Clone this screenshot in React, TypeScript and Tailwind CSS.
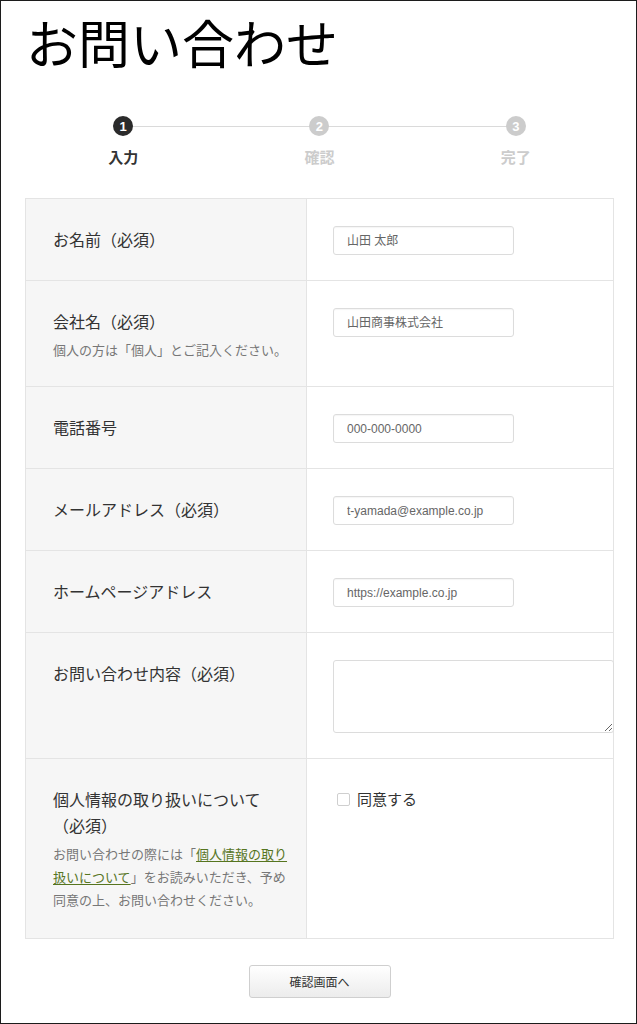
import React from 'react';

const JP = { fontFamily: '"Noto Sans CJK JP", "Liberation Sans", sans-serif' };

const STEPS = [
  { no: 1, label: '入力', active: true },
  { no: 2, label: '確認', active: false },
  { no: 3, label: '完了', active: false },
];

type Row = {
  label: string;
  note?: React.ReactNode;
  field: React.ReactNode;
};

function TextInput({ placeholder }: { placeholder: string }) {
  return (
    <input
      type="text"
      placeholder={placeholder}
      className="block w-[181px] h-[29px] px-[13px] border border-[#dcdcdc] rounded-[3px] bg-white text-[12px] text-[#555] placeholder:text-[#666] shadow-[inset_0_1px_1px_rgba(0,0,0,0.04)] outline-none"
      style={{ fontFamily: '"Liberation Sans", "Noto Sans CJK JP", sans-serif' }}
    />
  );
}

const ROWS: Row[] = [
  { label: 'お名前（必須）', field: <TextInput placeholder="山田 太郎" /> },
  {
    label: '会社名（必須）',
    note: '個人の方は「個人」とご記入ください。',
    field: <TextInput placeholder="山田商事株式会社" />,
  },
  { label: '電話番号', field: <TextInput placeholder="000-000-0000" /> },
  { label: 'メールアドレス（必須）', field: <TextInput placeholder="t-yamada@example.co.jp" /> },
  { label: 'ホームページアドレス', field: <TextInput placeholder="https://example.co.jp" /> },
  {
    label: 'お問い合わせ内容（必須）',
    field: (
      <textarea className="block w-[281px] h-[73px] border border-[#dcdcdc] rounded-[3px] bg-white outline-none" />
    ),
  },
  {
    label: '個人情報の取り扱いについて（必須）',
    note: (
      <>
        お問い合わせの際には「
        <a href="#" className="text-[#56751f] underline underline-offset-2">
          個人情報の取り扱いについて
        </a>
        」をお読みいただき、予め同意の上、お問い合わせください。
      </>
    ),
    field: (
      <label className="flex items-center gap-[7px] h-[26px] text-[15px] text-[#333]">
        <input
          type="checkbox"
          className="ml-[4px] w-[13px] h-[13px] appearance-none border border-[#cfcfcf] rounded-[2px] bg-white"
        />
        同意する
      </label>
    ),
  },
];

export default function App() {
  return (
    <div className="w-[637px] h-[1024px] border border-[#1c1c1c] bg-white text-[#333]" style={JP}>
      <h1 className="pt-[15px] pl-[25px] text-[52px] leading-[52px] font-normal text-black">
        お問い合わせ
      </h1>

      {/* Steps */}
      <div className="relative mt-[48px] ml-[24px] w-[589px] grid grid-cols-3">
        <div className="absolute left-[98px] right-[98px] top-[10px] h-px bg-[#dadada]" />
        {STEPS.map((s) => (
          <div key={s.no} className="relative flex flex-col items-center">
            <div
              className={`w-[20px] h-[20px] rounded-full flex items-center justify-center text-white text-[13px] font-bold leading-none ${
                s.active ? 'bg-[#2b2b2b]' : 'bg-[#cccccc]'
              }`}
              style={{ fontFamily: '"Liberation Sans", sans-serif' }}
            >
              {s.no}
            </div>
            <p
              className={`mt-[11px] text-[15px] leading-[20px] font-bold ${
                s.active ? 'text-[#333]' : 'text-[#cccccc]'
              }`}
            >
              {s.label}
            </p>
          </div>
        ))}
      </div>

      {/* Form table */}
      <div className="mt-[31px] ml-[24px] w-[589px] border border-[#e4e4e4]">
        {ROWS.map((row, i) => (
          <div
            key={row.label}
            className={`grid grid-cols-[281px_1fr] ${i > 0 ? 'border-t border-[#e4e4e4]' : ''}`}
          >
            <div
              className={`bg-[#f6f6f6] border-r border-[#e4e4e4] pt-[27px] pl-[27px] pr-[14px] ${
                i === ROWS.length - 1 ? 'pb-[27px]' : 'pb-[25px]'
              }`}
            >
              <p className="text-[16px] leading-[26px] text-[#333]">{row.label}</p>
              {row.note && (
                <p className="mt-[4px] text-[13px] leading-[23px] text-[#777]">{row.note}</p>
              )}
            </div>
            <div className="pt-[27px] pb-[25px] pl-[26px]">{row.field}</div>
          </div>
        ))}
      </div>

      <div className="mt-[26px] flex justify-center">
        <button
          type="button"
          className="ml-[2px] w-[142px] h-[33px] border border-[#cfcfcf] rounded-[3px] bg-gradient-to-b from-white to-[#ececec] text-[12px] text-[#333]"
        >
          確認画面へ
        </button>
      </div>
    </div>
  );
}
